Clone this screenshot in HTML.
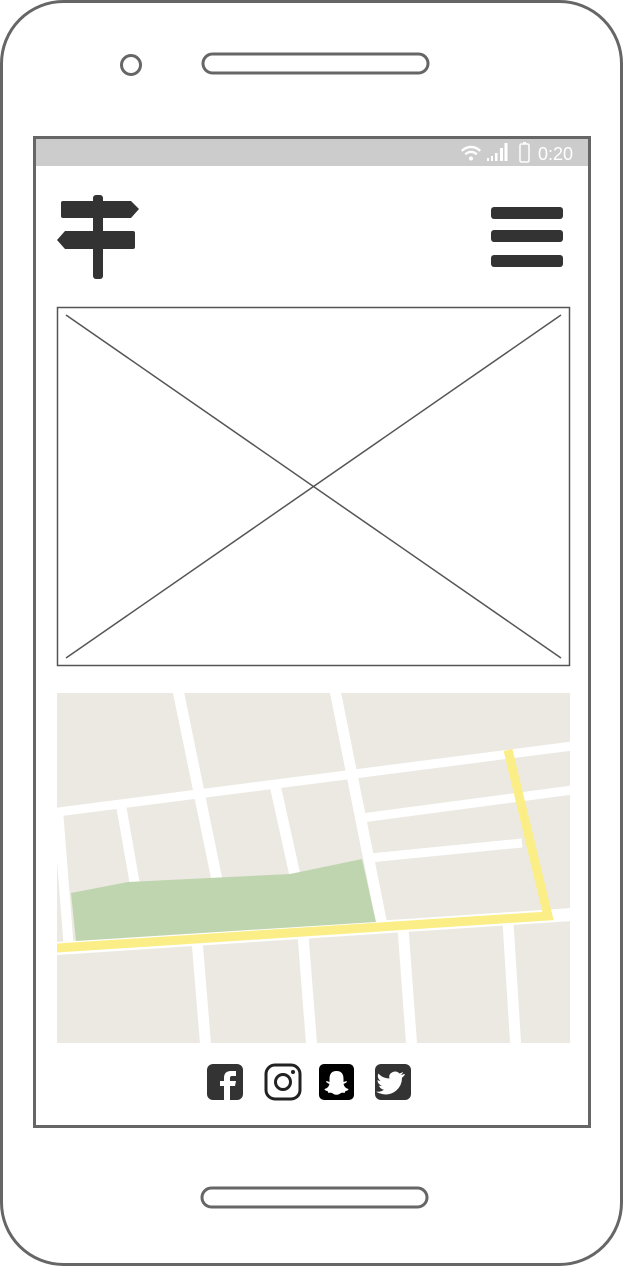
<!DOCTYPE html>
<html><head><meta charset="utf-8"><style>
html,body{margin:0;padding:0;background:#fff;width:624px;height:1270px;overflow:hidden;font-family:"Liberation Sans",sans-serif}
</style></head><body>
<svg width="624" height="1270" viewBox="0 0 624 1270" xmlns="http://www.w3.org/2000/svg" style="position:absolute;left:0;top:0">
<rect x="1.5" y="1.5" width="620" height="1263" rx="62" fill="#fff" stroke="#666" stroke-width="3"/>
<circle cx="131" cy="65" r="9.5" fill="none" stroke="#666" stroke-width="3"/>
<rect x="203" y="54" width="225" height="19" rx="9.5" fill="none" stroke="#666" stroke-width="3"/>
<rect x="202" y="1188" width="225" height="19" rx="9.5" fill="none" stroke="#666" stroke-width="3"/>
<rect x="34.5" y="137.5" width="555" height="989" fill="#fff" stroke="#666" stroke-width="3"/>
<rect x="36" y="139" width="552" height="27" fill="#cccccc"/>
<!-- status icons -->
<g fill="#fff">
<path d="M461 150 a14 14 0 0 1 20 0 l-1.6 1.8 a11.5 11.5 0 0 0 -16.8 0z"/>
<path d="M464.5 153.5 a9 9 0 0 1 13 0 l-1.6 1.8 a6.5 6.5 0 0 0 -9.8 0z"/>
<circle cx="471" cy="158.5" r="2"/>
<rect x="487" y="158" width="2" height="3"/><rect x="491" y="156" width="2" height="5"/><rect x="495" y="153" width="2.5" height="8"/><rect x="500" y="148" width="3" height="13"/><rect x="504.5" y="143" width="3" height="18"/>
<rect x="520" y="144" width="9" height="18" rx="1.5" fill="none" stroke="#fff" stroke-width="1.5"/><rect x="523" y="142" width="3" height="2"/>
</g>
<text x="538" y="160" font-family="Liberation Sans,sans-serif" font-size="18" fill="#fff">0:20</text>
<!-- signpost -->
<g fill="#333">
<rect x="93" y="195" width="10" height="84" rx="3"/>
<path d="M63 201 h68 l8 8 l-8 9 h-68 q-2 0 -2 -2 v-13 q0 -2 2 -2z"/>
<path d="M133 231 h-68 l-8 9 l8 9 h68 q2 0 2 -2 v-14 q0 -2 -2 -2z"/>
<rect x="491" y="207" width="72" height="12" rx="3"/>
<rect x="491" y="230" width="72" height="12" rx="3"/>
<rect x="491" y="255" width="72" height="12" rx="3"/>
</g>
<!-- image placeholder -->
<rect x="57.5" y="307.5" width="512" height="358" fill="#fff" stroke="#555" stroke-width="1.5"/>
<line x1="66" y1="315" x2="561" y2="658" stroke="#555" stroke-width="1.5"/>
<line x1="561" y1="315" x2="66" y2="658" stroke="#555" stroke-width="1.5"/>
<!-- map -->
<svg x="57" y="693" width="513" height="350" viewBox="57 693 513 350" overflow="hidden">
<rect x="57" y="693" width="513" height="350" fill="#ebe9e2"/>
<g stroke="#fff" stroke-width="11" fill="none">
<line x1="50" y1="813" x2="580" y2="745" stroke-width="9"/>
<line x1="362" y1="818" x2="580" y2="789" stroke-width="9"/>
<line x1="370" y1="858" x2="522" y2="843" stroke-width="9"/>
<line x1="50" y1="949" x2="580" y2="914" stroke-width="13"/>
<line x1="178" y1="690" x2="218" y2="885"/>
<line x1="335" y1="690" x2="382" y2="925"/>
<line x1="121" y1="805" x2="135" y2="885" stroke-width="10"/>
<line x1="275" y1="785" x2="296" y2="880"/>
<line x1="58" y1="810" x2="69" y2="950" stroke-width="10"/>
<line x1="197" y1="940" x2="206" y2="1050"/>
<line x1="303" y1="935" x2="312" y2="1050"/>
<line x1="403" y1="928" x2="412" y2="1050"/>
<line x1="508" y1="922" x2="516" y2="1050"/>
</g>
<polygon points="71,893 128,882 290,874 362,859 376,922 76,941" fill="#bfd5af"/>
<polyline points="50,948.5 548,916 508,750" fill="none" stroke="#fbee86" stroke-width="9" stroke-linejoin="miter"/>
</svg>
<!-- social -->
<rect x="207" y="1064" width="36" height="36" rx="6" fill="#333"/>
<path d="M230 1100 v-14 h5 l1 -5 h-6 v-3 q0 -2 2 -2 h4 v-5 h-5 q-7 0 -7 7 v3 h-4 v5 h4 v14z" fill="#fff"/>
<rect x="266" y="1065" width="34" height="34" rx="9" fill="none" stroke="#222" stroke-width="3"/>
<circle cx="283" cy="1082" r="7.5" fill="none" stroke="#222" stroke-width="3"/>
<circle cx="293" cy="1072" r="2" fill="#222"/>
<rect x="319" y="1064" width="35" height="36" rx="5" fill="#000"/>
<path d="M336.5 1071 q7 0 7 8 v3 l3 -1 q1 1 -1 2 l-2 1 q1 4 5 5 q0 1.5 -3 2 l-1 2 q-3 -1 -5 1 q-3 1.5 -6 0 q-2 -2 -5 -1 l-1 -2 q-3 -.5 -3 -2 q4 -1 5 -5 l-2 -1 q-2 -1 -1 -2 l3 1 v-3 q0 -8 7 -8z" fill="#fff"/>
<rect x="375" y="1064" width="36" height="36" rx="6" fill="#333"/>
<path d="M404 1074 q-2 1 -3.5 1 q2 -1 2.5 -3 q-2 1 -3.5 1.5 q-4 -4 -9 0 q-2 2 -1 5 q-7 0 -11 -5 q-2 4 2 7.5 q-1.5 0 -3 -1 q0 4.5 4.5 5.5 q-1.5 .5 -3 .2 q1.5 3.5 5 4 q-3.5 2.5 -8 2 q11 6 20 -1 q6 -5 6 -13 q2 -1.5 3 -3.2z" fill="#fff"/>
</svg>
</body></html>
